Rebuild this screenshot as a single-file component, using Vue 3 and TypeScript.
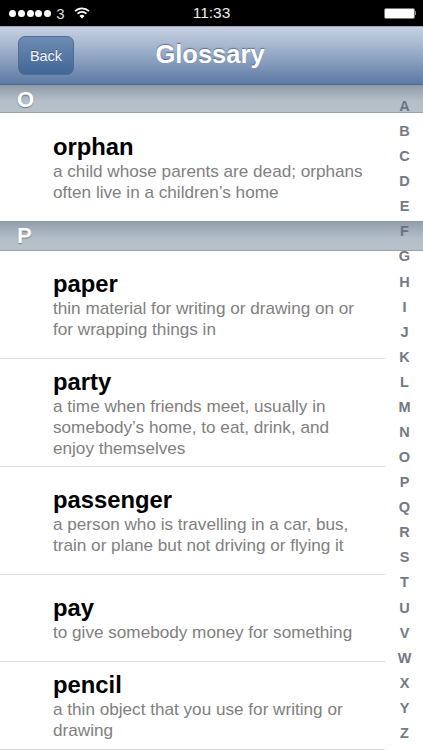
<script setup lang="ts">
interface Entry { word: string; def: string; rowClass: string }
const sections: { letter: string; entries: Entry[] }[] = [
  { letter: 'O', entries: [
    { word: 'orphan', def: 'a child whose parents are dead; orphans often live in a children’s home', rowClass: 'h108' },
  ] },
  { letter: 'P', entries: [
    { word: 'paper', def: 'thin material for writing or drawing on or for wrapping things in', rowClass: 'h108' },
    { word: 'party', def: 'a time when friends meet, usually in somebody’s home, to eat, drink, and enjoy themselves', rowClass: 'h108' },
    { word: 'passenger', def: 'a person who is travelling in a car, bus, train or plane but not driving or flying it', rowClass: 'h108' },
    { word: 'pay', def: 'to give somebody money for something', rowClass: 'h87' },
    { word: 'pencil', def: 'a thin object that you use for writing or drawing', rowClass: 'h88' },
  ] },
]
const letters = 'ABCDEFGHIJKLMNOPQRSTUVWXYZ'.split('')
</script>

<template>
  <div class="screen">
    <div class="status">
      <div class="status-left">
        <span class="dots"><i v-for="n in 5" :key="n"></i></span>
        <span class="carrier">3</span>
        <svg class="wifi" width="16" height="12" viewBox="0 0 16 12">
          <path d="M1 4.2a10 10 0 0 1 14 0" fill="none" stroke="#fff" stroke-width="1.7" />
          <path d="M3.5 6.7a6.5 6.5 0 0 1 9 0" fill="none" stroke="#fff" stroke-width="1.7" />
          <path d="M8 11.5 5.5 8.9a3.6 3.6 0 0 1 5 0z" fill="#fff" />
        </svg>
      </div>
      <span class="time">11:33</span>
      <div class="battery"><span class="cell"></span><span class="nub"></span></div>
    </div>
    <header class="nav">
      <button class="back">Back</button>
      <h1 class="title">Glossary</h1>
    </header>
    <main class="list">
      <section v-for="s in sections" :key="s.letter">
        <div class="head">{{ s.letter }}</div>
        <div v-for="e in s.entries" :key="e.word" class="row" :class="e.rowClass">
          <div class="word">{{ e.word }}</div>
          <div class="def">{{ e.def }}</div>
        </div>
      </section>
    </main>
    <nav class="index">
      <span v-for="l in letters" :key="l">{{ l }}</span>
    </nav>
  </div>
</template>

<style>
html, body { margin: 0; background: #fff; }
</style>

<style scoped>
.screen {
  position: relative;
  width: 423px;
  height: 750px;
  overflow: hidden;
  background: #fff;
  font-family: "Liberation Sans", Arial, sans-serif;
}
.status {
  height: 26px;
  background: #000;
  color: #fff;
  display: flex;
  align-items: center;
  justify-content: space-between;
  padding: 0 7px 0 9px;
  position: relative;
}
.status-left { display: flex; align-items: center; gap: 5px; }
.dots { display: flex; gap: 1.8px; }
.dots i { width: 7px; height: 7px; border-radius: 50%; background: #fff; display: block; }
.carrier { font-size: 15px; color: #ddd; }
.wifi { margin-left: 4px; }
.time {
  position: absolute;
  left: 0;
  right: 0;
  text-align: center;
  font-size: 15.5px;
  color: #eee;
}
.battery { display: flex; align-items: center; }
.cell {
  width: 29px;
  height: 9px;
  background: #fff;
  border: 1px solid #777;
  border-radius: 2px;
  display: block;
}
.nub { width: 1.5px; height: 4px; background: #888; display: block; }
.nav {
  height: 59px;
  box-sizing: border-box;
  border-top: 1px solid #9aa5b5;
  border-bottom: 1px solid #4a6a96;
  background: linear-gradient(#c6d1e1, #a9b9d0 30%, #5c7aa4);
  position: relative;
  display: flex;
  align-items: center;
  justify-content: center;
}
.back {
  position: absolute;
  left: 18px;
  top: 9px;
  width: 56px;
  height: 39px;
  padding: 0;
  box-sizing: border-box;
  border: 1px solid #4d6c98;
  border-radius: 7px;
  background: linear-gradient(#6e8bb3, #416796);
  color: #f2f5fa;
  font: 14.5px "Liberation Sans", Arial, sans-serif;
  text-shadow: 0 -1px 0 rgba(0, 0, 0, .3);
}
.title {
  margin: 0 3px 3px 0;
  font-size: 25.5px;
  font-weight: bold;
  color: #fff;
  text-shadow: 0 -1px 1px rgba(50, 70, 100, .6);
}
.head {
  height: 30px;
  box-sizing: border-box;
  padding: 1px 0 0 17px;
  border-top: 1px solid #8e9aa5;
  border-bottom: 1px solid #9aa4ad;
  background: linear-gradient(#929fab, #b4bfc8 60%, #b7c1ca);
  color: #fff;
  font-size: 22px;
  font-weight: bold;
  line-height: 25px;
  text-shadow: 0 1px 1px rgba(60, 70, 80, .55);
}
section:first-child .head { height: 28px; }
.row {
  box-sizing: border-box;
  padding-left: 53px;
  padding-right: 52px;
  display: flex;
  flex-direction: column;
  justify-content: center;
  position: relative;
}
section:first-child .row { padding-top: 2px; }
.row::after {
  content: "";
  position: absolute;
  left: 0;
  width: 385px;
  bottom: 0;
  height: 1px;
  background: #dcdcdc;
}
section:first-child .row::after { display: none; }
.h108 { height: 108px; }
.h87 { height: 87px; }
.h88 { height: 88px; }
.word {
  font-size: 23.8px;
  font-weight: bold;
  line-height: 28px;
  color: #000;
}
.def {
  font-size: 17.15px;
  line-height: 21px;
  color: #808080;
}
.index {
  position: absolute;
  top: 94px;
  right: 0;
  width: 37px;
  display: flex;
  flex-direction: column;
  align-items: center;
  color: #666c78;
  font-size: 14.5px;
  font-weight: bold;
}
.index span { height: 25.08px; line-height: 25px; opacity: .9; }
</style>
